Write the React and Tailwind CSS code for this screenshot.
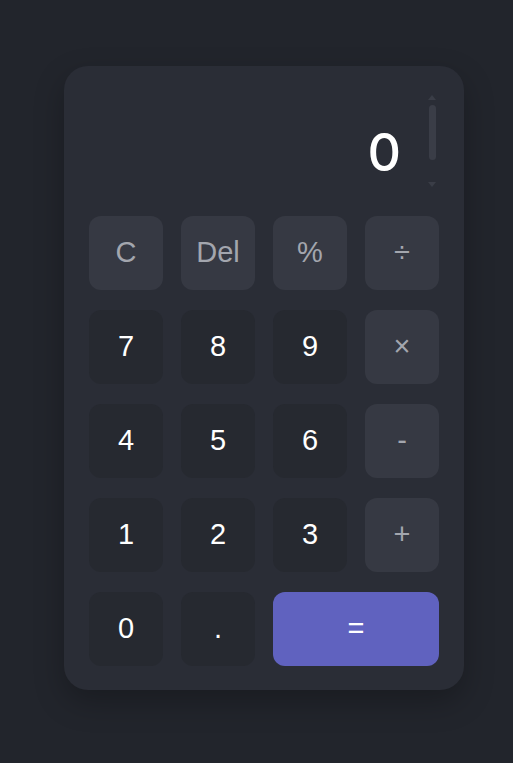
export default function App() {
  const keys = [
    { label: "C", kind: "fn" },
    { label: "Del", kind: "fn" },
    { label: "%", kind: "fn" },
    { label: "÷", kind: "op" },
    { label: "7", kind: "num" },
    { label: "8", kind: "num" },
    { label: "9", kind: "num" },
    { label: "×", kind: "op" },
    { label: "4", kind: "num" },
    { label: "5", kind: "num" },
    { label: "6", kind: "num" },
    { label: "-", kind: "op" },
    { label: "1", kind: "num" },
    { label: "2", kind: "num" },
    { label: "3", kind: "num" },
    { label: "+", kind: "op" },
    { label: "0", kind: "num" },
    { label: ".", kind: "num" },
    { label: "=", kind: "eq" },
  ];

  const styles = {
    fn: "bg-[#363943] text-[#a3a6ae]",
    op: "bg-[#363943] text-[#a3a6ae]",
    num: "bg-[#262930] text-white",
    eq: "col-span-2 bg-[#6062bf] text-white",
  };

  return (
    <div className="min-h-screen bg-[#22252c] pt-[66px] pl-[64px]">
      <div className="w-[400px] h-[624px] rounded-[24px] bg-[#2a2d36] p-[25px] shadow-[0_12px_30px_rgba(0,0,0,0.25)]">
        {/* Display */}
        <div className="h-[100px] mb-[25px] flex">
          <div className="flex-1 flex items-end justify-end pr-[24px] pb-[12px]">
            <span className="text-white text-[52px] leading-none font-medium font-['Inter',sans-serif]">0</span>
          </div>
          <div className="w-[14px] flex flex-col items-center py-[4px]">
            <div className="w-0 h-0 border-l-[4px] border-r-[4px] border-b-[5px] border-l-transparent border-r-transparent border-b-[#3a3d47]" />
            <div className="w-[7px] h-[55px] mt-[5px] rounded-full bg-[#3a3d47]" />
            <div className="flex-1" />
            <div className="w-0 h-0 border-l-[4px] border-r-[4px] border-t-[5px] border-l-transparent border-r-transparent border-t-[#3a3d47]" />
          </div>
        </div>

        {/* Keypad */}
        <div className="grid grid-cols-4 gap-x-[18px] gap-y-[20px]">
          {keys.map((k) => (
            <button
              key={k.label}
              className={`h-[74px] rounded-[12px] flex items-center justify-center text-[29px] font-['Liberation_Sans',Arial,sans-serif] ${styles[k.kind]}`}
            >
              {k.label}
            </button>
          ))}
        </div>
      </div>
    </div>
  );
}
